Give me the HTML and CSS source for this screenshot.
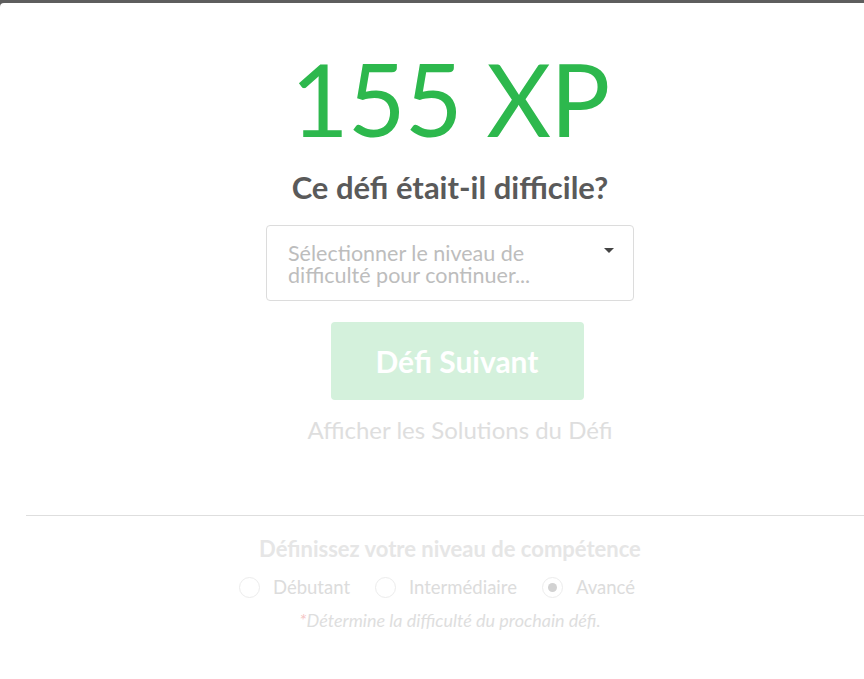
FILE: index.html
```html
<!DOCTYPE html>
<html lang="fr">
<head>
<meta charset="utf-8">
<title>Défi terminé</title>
<link rel="stylesheet" href="styles.css">
</head>
<body>
<div class="modal">
  <div class="result">
    <h1 class="xp">155 XP</h1>
    <h2 class="question">Ce défi était-il difficile?</h2>
    <div class="select">
      <span class="placeholder">Sélectionner le niveau de difficulté pour continuer...</span>
      <span class="caret"></span>
    </div>
    <button class="next" type="button">Défi Suivant</button>
    <a class="solutions">Afficher les Solutions du Défi</a>
  </div>
  <hr class="divider">
  <div class="skill">
    <h3 class="skill-title">Définissez votre niveau de compétence</h3>
    <div class="radios">
      <label class="radio"><span class="circle"></span>Débutant</label>
      <label class="radio"><span class="circle"></span>Intermédiaire</label>
      <label class="radio"><span class="circle checked"></span>Avancé</label>
    </div>
    <p class="note"><span class="star">*</span>Détermine la difficulté du prochain défi.</p>
  </div>
</div>
</body>
</html>
```
FILE: styles.css
```css
html, body {
  margin: 0;
  padding: 0;
  height: 100%;
  overflow: hidden;
}
body {
  background: #5e5e5e;
  font-family: Lato, "Open Sans", sans-serif;
}
.modal {
  margin-top: 3px;
  width: 900px;
  height: 700px;
  background: #fff;
  border-top-left-radius: 4px;
  padding: 43px 26px 0;
  box-sizing: border-box;
}
.result {
  display: flex;
  flex-direction: column;
  align-items: center;
}
.xp {
  margin: 0;
  font-size: 100px;
  line-height: 104px;
  letter-spacing: -1px;
  font-weight: 400;
  color: #2db84d;
}
.question {
  margin: 19px 0 0;
  font-size: 31px;
  line-height: 36px;
  font-weight: 700;
  color: #5a5a5a;
}
.select {
  margin-top: 20px;
  width: 368px;
  height: 76px;
  box-sizing: border-box;
  border: 1px solid #dcdcdc;
  border-radius: 4px;
  padding: 16px 44px 0 21px;
  display: flex;
  align-items: flex-start;
  position: relative;
}
.placeholder {
  font-size: 21.5px;
  line-height: 22px;
  color: #bdbdbd;
}
.caret {
  position: absolute;
  right: 19px;
  top: 22px;
  width: 0;
  height: 0;
  border-left: 5px solid transparent;
  border-right: 5px solid transparent;
  border-top: 5px solid #444;
}
.next {
  margin-top: 21px;
  width: 253px;
  height: 78px;
  border: none;
  border-radius: 4px;
  background: #d4f1dc;
  color: #fff;
  font-family: Lato, sans-serif;
  font-size: 30px;
  font-weight: 700;
  position: relative;
  left: 7px;
}
.solutions {
  margin-top: 15px;
  font-size: 24px;
  line-height: 30px;
  color: #dedede;
  position: relative;
  left: 10px;
}
.divider {
  margin: 70px 0 0;
  border: none;
  border-top: 1px solid #dedede;
  height: 0;
}
.skill {
  display: flex;
  flex-direction: column;
  align-items: center;
}
.skill-title {
  margin: 20px 0 0;
  font-size: 22px;
  line-height: 26px;
  font-weight: 700;
  color: #e6e6e6;
}
.radios {
  margin-top: 12px;
  display: flex;
  gap: 25px;
  position: relative;
  left: -13px;
}
.radio {
  display: flex;
  align-items: center;
  gap: 13px;
  font-size: 18.5px;
  line-height: 26px;
  color: #dcdcdc;
}
.circle {
  width: 19px;
  height: 19px;
  border: 1px solid #ececec;
  border-radius: 50%;
  display: flex;
  align-items: center;
  justify-content: center;
}
.circle.checked::after {
  content: "";
  width: 9px;
  height: 9px;
  border-radius: 50%;
  background: #d2d2d2;
}
.note {
  margin: 8px 0 0;
  font-size: 18px;
  line-height: 24px;
  font-style: italic;
  color: #dedede;
}
.star {
  color: #f5c6c6;
}
```
